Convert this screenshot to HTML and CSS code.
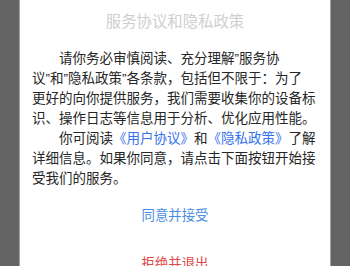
FILE: index.html
```html
<!DOCTYPE html>
<html lang="zh-CN">
<head>
    <meta charset="UTF-8">
    <meta name="viewport" content="width=device-width, initial-scale=1.0">
    <title>服务协议和隐私政策</title>
    <link rel="stylesheet" href="styles.css">
</head>
<body>
    <div class="mask">
        <div class="dialog">
            <div class="dialog-title">服务协议和隐私政策</div>

            <div class="dialog-body">
                <p>请你务必审慎阅读、充分理解”服务协<br>议”和”隐私政策”各条款，包括但不限于：为了<br>更好的向你提供服务，我们需要收集你的设备标识、操作日志等信息用于分析、优化应用性能。</p>
                <p>你可阅读<a href="#" class="link">《用户协议》</a>和<a href="#" class="link">《隐私政策》</a>了解详细信息。如果你同意，请点击下面按钮开始接受我们的服务。</p>
            </div>

            <div class="dialog-actions">
                <button class="action agree-btn">同意并接受</button>
                <button class="action reject-btn">拒绝并退出</button>
            </div>
        </div>
    </div>
</body>
</html>
```

FILE: styles.css
```css
* {
    margin: 0;
    padding: 0;
    box-sizing: border-box;
    font-family: "Liberation Sans", "Noto Sans CJK SC", sans-serif;
}

body {
    background-color: #646464;
    height: 266px;
    overflow: hidden;
}

.mask {
    padding: 0 19px;
}

.dialog {
    background: white;
    border-left: 1px solid #a3a3a3;
    border-right: 1px solid #a3a3a3;
    padding-top: 12px;
}

.dialog-title {
    text-align: center;
    font-size: 15.4px;
    line-height: 20px;
    color: #cfcfcf;
    margin-bottom: 17px;
}

.dialog-body {
    padding: 0 12px;
    font-size: 13.5px;
    line-height: 20px;
    color: #262626;
}

.dialog-body p {
    text-indent: 2em;
}

.link {
    color: #3671ee;
    text-decoration: none;
}

.dialog-actions {
    margin-top: 3px;
}

.action {
    display: block;
    width: 100%;
    height: 48px;
    border: none;
    background: none;
    font-size: 13.4px;
    line-height: 48px;
    cursor: pointer;
}

.agree-btn {
    color: #4a8ee2;
}

.reject-btn {
    color: #e04a4a;
}
```
